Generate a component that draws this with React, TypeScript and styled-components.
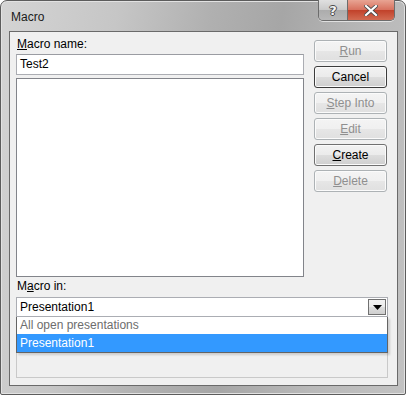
import styled, { createGlobalStyle } from "styled-components";

const GlobalStyle = createGlobalStyle`
  html, body {
    margin: 0;
    padding: 0;
    background: #ffffff;
  }
  body {
    font-family: "Liberation Sans", Arial, sans-serif;
    font-size: 12px;
    color: #000000;
  }
`;

const buttons = [
    { label: "Run", key: "R", rest: "un", disabled: true },
    { label: "Cancel", key: "", rest: "Cancel", disabled: false, isDefault: true },
    { label: "Step Into", key: "S", rest: "tep Into", disabled: true },
    { label: "Edit", key: "E", rest: "dit", disabled: true },
    { label: "Create", key: "C", rest: "reate", disabled: false },
    { label: "Delete", key: "D", rest: "elete", disabled: true },
];

export default function App() {
    return (
        <>
            <GlobalStyle />
            <Window>
                <TitleBar>
                    <Title>Macro</Title>
                    <Captions>
                        <HelpButton>?</HelpButton>
                        <CloseButton>
                            <svg width="14" height="11" viewBox="0 0 14 11">
                                <path
                                    d="M2 1 L12 10 M12 1 L2 10"
                                    stroke="#4a4a4a"
                                    strokeWidth="3.8"
                                    strokeLinecap="square"
                                />
                                <path
                                    d="M2 1 L12 10 M12 1 L2 10"
                                    stroke="#ffffff"
                                    strokeWidth="2.2"
                                    strokeLinecap="square"
                                />
                            </svg>
                        </CloseButton>
                    </Captions>
                </TitleBar>
                <Client>
                    <TopSection>
                        <LeftColumn>
                            <Label>
                                <Key>M</Key>acro name:
                            </Label>
                            <TextBox>Test2</TextBox>
                            <ListBox />
                        </LeftColumn>
                        <ButtonColumn>
                            {buttons.map((b) => (
                                <DialogButton
                                    key={b.label}
                                    $disabled={b.disabled}
                                    $isDefault={b.isDefault}
                                >
                                    {b.key && <Key>{b.key}</Key>}
                                    {b.rest}
                                </DialogButton>
                            ))}
                        </ButtonColumn>
                    </TopSection>
                    <Label $tall>
                        M<Key>a</Key>cro in:
                    </Label>
                    <ComboWrap>
                        <Combo>
                            <span>Presentation1</span>
                            <ComboArrow>
                                <svg width="9" height="5" viewBox="0 0 9 5">
                                    <path d="M0 0 H9 L4.5 5 Z" fill="#000000" />
                                </svg>
                            </ComboArrow>
                        </Combo>
                        <DropList>
                            <DropItem>All open presentations</DropItem>
                            <DropItem $selected>Presentation1</DropItem>
                        </DropList>
                    </ComboWrap>
                    <Description />
                </Client>
            </Window>
        </>
    );
}

const Window = styled.div`
    width: 406px;
    height: 395px;
    box-sizing: border-box;
    display: flex;
    flex-direction: column;
    border: 1px solid #5c5c5c;
    border-radius: 7px 7px 2px 2px;
    padding: 0 7px 8px 8px;
    background: linear-gradient(
        100deg,
        #d4d4d4 0%,
        #c6c6c6 25%,
        #b0b0b0 45%,
        #a6a6a6 60%,
        #b9b9b9 80%,
        #c2c2c2 100%
    );
    box-shadow: inset 0 0 0 1px #e2e2e2;
`;

const TitleBar = styled.div`
    height: 30px;
    display: flex;
    justify-content: space-between;
    align-items: flex-start;
`;

const Title = styled.div`
    padding: 9px 0 0 2px;
    font-family: "Liberation Sans", Arial, sans-serif;
    font-size: 12px;
    color: #1a1a1a;
`;

const Captions = styled.div`
    display: flex;
    margin-top: -1px;
    margin-right: 3px;
    border: 1px solid #6c6c6c;
    border-top: none;
    border-radius: 0 0 5px 5px;
    overflow: hidden;
    box-shadow: 0 1px 0 rgba(255, 255, 255, 0.6);
`;

const HelpButton = styled.div`
    width: 28px;
    height: 20px;
    display: flex;
    align-items: center;
    justify-content: center;
    font-family: "DejaVu Sans", sans-serif;
    font-weight: bold;
    font-size: 13px;
    color: #f4f4f4;
    text-shadow: 1px 0 0 #4a4a4a, -1px 0 0 #4a4a4a, 0 1px 0 #4a4a4a, 0 -1px 0 #4a4a4a;
    border-right: 1px solid #6c6c6c;
    background: linear-gradient(#e0e0e0 0%, #c9c9c9 50%, #acacac 51%, #b8b8b8 100%);
`;

const CloseButton = styled.div`
    width: 46px;
    height: 20px;
    display: flex;
    align-items: center;
    justify-content: center;
    background: linear-gradient(#e8a493 0%, #d7705d 50%, #c1412a 51%, #d26b52 100%);
`;

const Client = styled.div`
    flex: 1;
    display: flex;
    flex-direction: column;
    border: 1px solid #6a6a6a;
    background: #f0f0f0;
    padding: 5px 9px 7px 6px;
`;

const TopSection = styled.div`
    display: grid;
    grid-template-columns: 288px 73px;
    column-gap: 10px;
`;

const LeftColumn = styled.div`
    display: flex;
    flex-direction: column;
`;

const Label = styled.div<{ $tall?: boolean }>`
    height: ${(p) => (p.$tall ? "20px" : "17px")};
    line-height: ${(p) => (p.$tall ? "19px" : "15px")};
    padding-left: 1px;
    font-size: 12px;
    color: #000000;
`;

const Key = styled.span`
    text-decoration: underline;
`;

const TextBox = styled.div`
    box-sizing: border-box;
    height: 21px;
    border: 1px solid #abadb3;
    border-top-color: #9a9ca2;
    background: #ffffff;
    padding: 0 3px;
    line-height: 19px;
    font-size: 12px;
`;

const ListBox = styled.div`
    margin-top: 3px;
    height: 199px;
    box-sizing: border-box;
    border: 1px solid #82848a;
    background: #ffffff;
`;

const ButtonColumn = styled.div`
    display: flex;
    flex-direction: column;
    gap: 4px;
    padding-top: 3px;
`;

const DialogButton = styled.div<{ $disabled?: boolean; $isDefault?: boolean }>`
    box-sizing: border-box;
    height: 22px;
    display: flex;
    align-items: center;
    justify-content: center;
    border-radius: 3px;
    font-size: 12px;
    border: 1px solid
        ${(p) => (p.$disabled ? "#adb2b5" : p.$isDefault ? "#3c3c3c" : "#707070")};
    color: ${(p) => (p.$disabled ? "#8f8f8f" : "#000000")};
    background: ${(p) =>
        p.$disabled
            ? "linear-gradient(#f4f4f4 0%, #f0f0f0 50%, #e6e6e6 51%, #e0e0e0 100%)"
            : "linear-gradient(#f2f2f2 0%, #ebebeb 50%, #dddddd 51%, #cfcfcf 100%)"};
    box-shadow: inset 0 0 0 1px #fbfbfb;
`;

const ComboWrap = styled.div`
    position: relative;
`;

const Combo = styled.div`
    box-sizing: border-box;
    height: 20px;
    display: flex;
    align-items: center;
    justify-content: space-between;
    border: 1px solid #abadb3;
    background: #ffffff;
    padding: 0 1px 0 3px;
    font-size: 12px;
`;

const ComboArrow = styled.div`
    box-sizing: border-box;
    width: 18px;
    height: 16px;
    display: flex;
    align-items: center;
    justify-content: center;
    border: 1px solid #707070;
    background: linear-gradient(#f2f2f2 0%, #ebebeb 50%, #dddddd 51%, #cfcfcf 100%);
`;

const DropList = styled.div`
    position: absolute;
    left: 0;
    right: 0;
    top: 20px;
    z-index: 2;
    border: 1px solid #646464;
    border-top: none;
    background: #ffffff;
    box-shadow: 2px 2px 2px rgba(0, 0, 0, 0.15);
`;

const DropItem = styled.div<{ $selected?: boolean }>`
    height: ${(p) => (p.$selected ? "18px" : "17px")};
    line-height: ${(p) => (p.$selected ? "18px" : "17px")};
    padding-left: 3px;
    font-size: 12px;
    color: ${(p) => (p.$selected ? "#ffffff" : "#6d6d6d")};
    background: ${(p) => (p.$selected ? "#3399ff" : "#ffffff")};
`;

const Description = styled.div`
    flex: 1;
    box-sizing: border-box;
    border: 1px solid #c9c9c9;
    background: #f0f0f0;
`;
